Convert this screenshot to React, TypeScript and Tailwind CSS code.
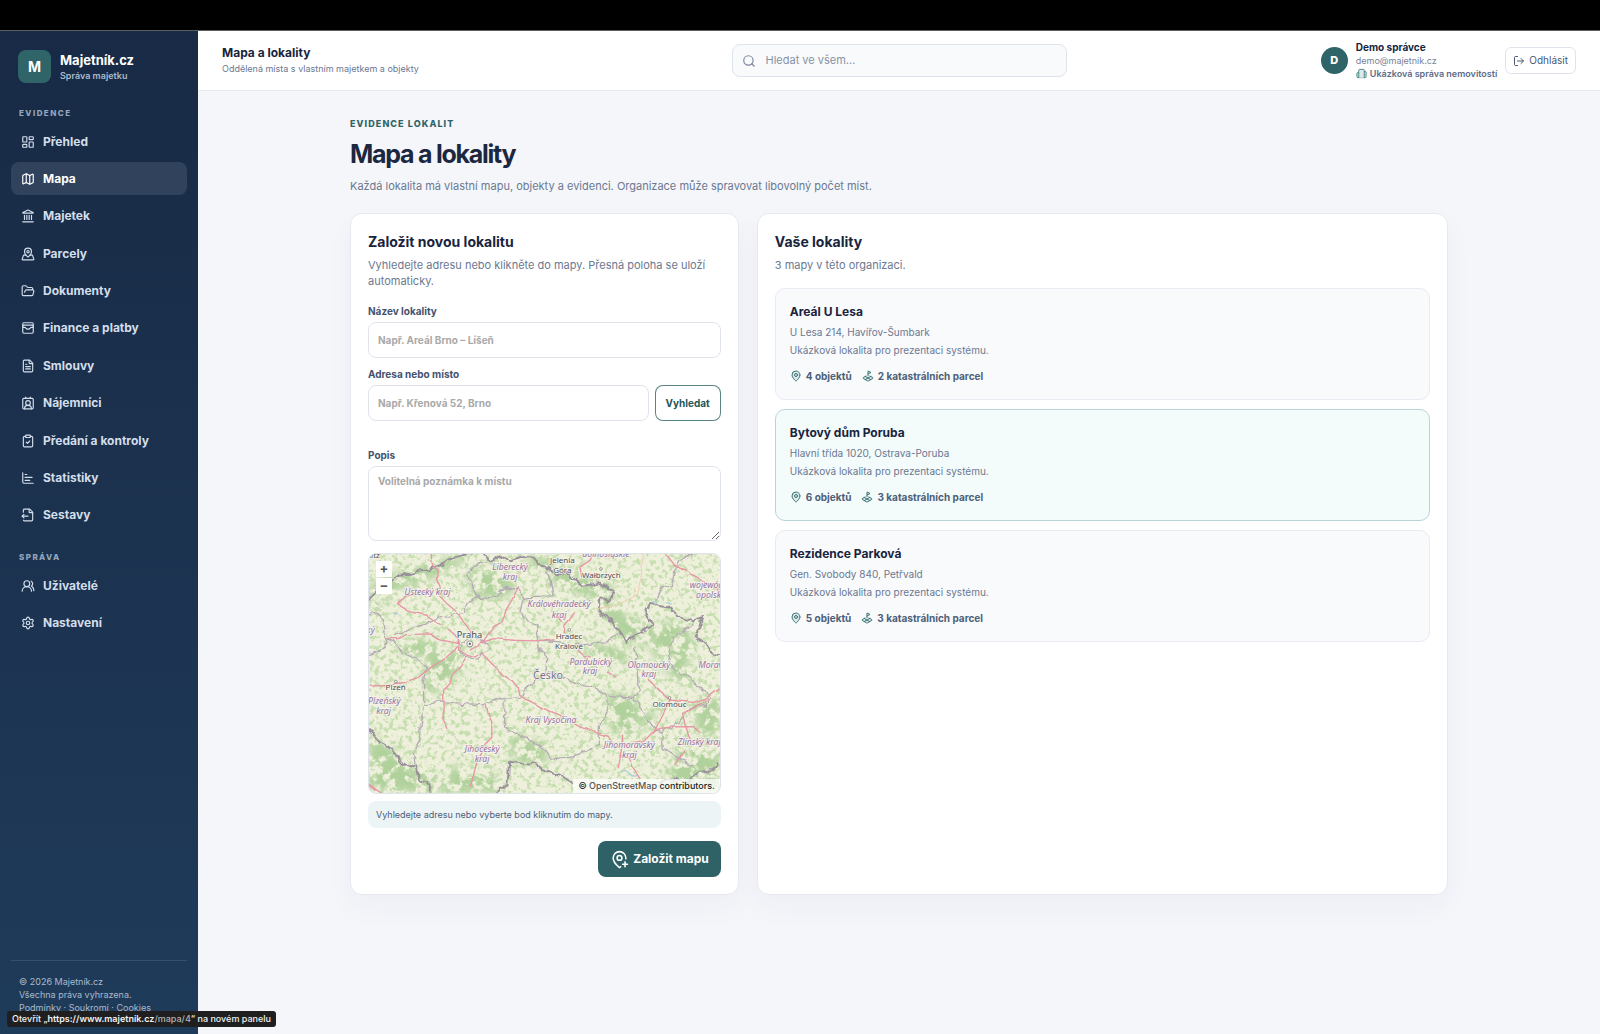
import {
  Building2,
  ChartBar,
  ClipboardCheck,
  ContactRound,
  FileOutput,
  FileText,
  FolderOpen,
  Landmark,
  LandPlot,
  LayoutDashboard,
  LogOut,
  Map as MapIcon,
  MapPin,
  MapPinned,
  MapPinPlus,
  Search,
  Settings,
  UsersRound,
  WalletCards,
  type LucideIcon,
} from 'lucide-react';

interface NavItem {
  label: string;
  icon: LucideIcon;
  active?: boolean;
}

interface Locality {
  name: string;
  address: string;
  note: string;
  objects: string;
  parcels: string;
  highlighted?: boolean;
}

const evidenceItems: NavItem[] = [
  { label: 'Přehled', icon: LayoutDashboard },
  { label: 'Mapa', icon: MapIcon, active: true },
  { label: 'Majetek', icon: Landmark },
  { label: 'Parcely', icon: MapPinned },
  { label: 'Dokumenty', icon: FolderOpen },
  { label: 'Finance a platby', icon: WalletCards },
  { label: 'Smlouvy', icon: FileText },
  { label: 'Nájemníci', icon: ContactRound },
  { label: 'Předání a kontroly', icon: ClipboardCheck },
  { label: 'Statistiky', icon: ChartBar },
  { label: 'Sestavy', icon: FileOutput },
];

const adminItems: NavItem[] = [
  { label: 'Uživatelé', icon: UsersRound },
  { label: 'Nastavení', icon: Settings },
];

const localities: Locality[] = [
  {
    name: 'Areál U Lesa',
    address: 'U Lesa 214, Havířov-Šumbark',
    note: 'Ukázková lokalita pro prezentaci systému.',
    objects: '4 objektů',
    parcels: '2 katastrálních parcel',
  },
  {
    name: 'Bytový dům Poruba',
    address: 'Hlavní třída 1020, Ostrava-Poruba',
    note: 'Ukázková lokalita pro prezentaci systému.',
    objects: '6 objektů',
    parcels: '3 katastrálních parcel',
    highlighted: true,
  },
  {
    name: 'Rezidence Parková',
    address: 'Gen. Svobody 840, Petřvald',
    note: 'Ukázková lokalita pro prezentaci systému.',
    objects: '5 objektů',
    parcels: '3 katastrálních parcel',
  },
];

const roads = [
  '213,26 217,60 234,75 232,105 240,125 236,150 260,175 290,200 310,230 335,262',
  '475,125 455,165 440,190 425,230 400,245 385,265 372,285 330,312',
  '365,292 400,280 460,285 520,287 585,281',
  '613,262 615,240 630,222 643,203',
  '200,143 140,152 108,175 150,200 200,210 240,238',
  '80,280 115,280 140,268 210,266 240,285 300,295',
  '265,252 285,270 300,295 298,315 320,330 345,338 365,325',
  '26,420 75,418 130,412 180,395 215,365 260,335 295,305',
  '315,340 300,365 275,390 270,415 250,435 252,490 248,520 260,548',
  '365,325 400,360 430,390 460,410 475,430 480,455 510,468 550,490 600,510 650,540 700,560 745,575 765,605',
  '378,478 385,510 395,530 395,580 370,605 350,650 340,690 330,722',
  '765,605 800,600 850,590 875,565 900,550 950,545 1000,545 1020,562',
  '862,403 900,440 930,465 905,515 880,565',
  '930,465 1000,472 1040,460 1078,432',
  '1050,462 1000,490 968,505 975,535 992,590',
  '918,26 945,60 990,85 1030,105 1078,135',
  '665,95 660,65 690,45 700,26',
  '808,635 815,665 840,700',
  '788,570 785,610 780,640 775,665',
  '655,315 670,330 690,335',
  '745,378 768,396',
  '585,208 604,228',
  '975,615 945,658',
  '26,718 62,744',
];

const stateBorders = [
  '26,165 50,130 90,115 110,90 150,85 200,75 235,65 260,45 300,30 340,26',
  '370,26 385,48 420,32 450,48 500,32 520,40 545,65 570,70 590,90 630,85 640,100 670,122 720,112 760,135 745,170 720,165 710,190 730,210 760,235 780,260 800,290 830,275 850,255 880,245 865,210 855,190 865,170 900,185 930,190 960,215 1000,228 1030,215 1020,250 1005,270 1030,290 1050,322 1080,330',
  '26,555 60,590 100,615 120,650 150,670 165,662 175,700 200,710 215,746',
  '410,746 415,725 445,725 450,650 480,655 520,655 560,675 600,690 640,715',
  '1080,650 1060,675 1020,680 985,712 940,700 900,712',
];

const regionBorders = [
  '80,280 100,290 130,325 180,345 200,370 190,420 190,480 180,540 178,590 160,620 165,665',
  '100,270 160,250 240,215 310,205 325,175 350,155 335,120 325,80 350,60 375,45',
  '350,155 390,160 430,135 470,130 490,155 580,152 570,110 560,75',
  '490,155 480,200 500,230 530,240 535,280 540,310 560,340 558,380',
  '535,285 600,290 640,300 700,292 740,290 780,265',
  '190,480 240,470 300,478 370,482 400,460 440,462 490,455 500,420 560,378 620,405 700,425 740,455 745,500 715,545 715,600 640,635 575,645 540,600 460,560 430,540 432,465',
  '745,450 820,460 835,430 830,350 820,300',
  '820,460 850,500 880,545 905,560 910,610 970,650 1000,660',
  '905,560 960,530 980,490 1040,480 1050,460 1020,420 940,370 920,330 930,290 1000,235',
  '890,165 905,130 935,120 945,75 960,40 1000,26',
  '26,325 60,315 80,290 75,240 70,205 30,205',
  '298,300 300,325 345,340 385,315 380,290 340,275 300,298',
];

// Places where the woods grow thick: border mountains and highlands.
const woods = [
  '26,185 26,120 110,80 230,45 330,26 300,60 210,100 120,130 60,180',
  '320,75 420,60 470,130 440,155 350,160 325,120',
  '480,26 560,40 640,80 760,115 760,170 640,140 560,100',
  '700,160 760,170 810,220 880,240 860,300 800,300 760,250',
  '870,240 960,230 1005,290 980,370 1000,440 940,400 880,330',
  '26,560 100,610 160,670 250,700 230,744 26,744',
  '200,330 300,310 320,350 240,440 190,440',
  '110,290 230,280 230,330 140,340',
  '740,440 830,460 850,560 780,580 740,520',
  '1000,480 1080,450 1080,580 1010,560',
  '840,480 880,500 890,550 860,545',
  '280,660 420,690 420,744 240,744',
  '640,290 800,310 800,360 690,330',
  '960,600 1080,590 1080,744 900,744',
  '440,560 560,600 560,660 460,650',
];

function LocalityMap() {
  return (
    <svg
      className="block h-full w-full"
      viewBox="26 26 1054 718"
      preserveAspectRatio="xMidYMid slice"
      role="img"
      aria-label="Mapa"
    >
      <defs>
        <filter id="scatter" x="0" y="0" width="100%" height="100%" colorInterpolationFilters="sRGB">
          <feTurbulence type="fractalNoise" baseFrequency="0.07" numOctaves="4" seed="7" />
          <feColorMatrix values="0 0 0 0 0.78  0 0 0 0 0.875  0 0 0 0 0.69  6 0 0 0 -3" />
        </filter>
        <filter id="thick" x="0" y="0" width="100%" height="100%" colorInterpolationFilters="sRGB">
          <feTurbulence type="fractalNoise" baseFrequency="0.03" numOctaves="5" seed="21" />
          <feColorMatrix values="0 0 0 0 0.69  0 0 0 0 0.82  0 0 0 0 0.61  9 0 0 0 -3.9" />
        </filter>
        <filter id="soft" x="-20%" y="-20%" width="140%" height="140%">
          <feGaussianBlur stdDeviation="14" />
        </filter>
        <filter id="wiggle" x="-5%" y="-5%" width="110%" height="110%">
          <feTurbulence type="fractalNoise" baseFrequency="0.035" numOctaves="2" seed="4" />
          <feDisplacementMap in="SourceGraphic" scale="24" xChannelSelector="R" yChannelSelector="G" />
        </filter>
        <filter id="bend" x="-5%" y="-5%" width="110%" height="110%">
          <feTurbulence type="fractalNoise" baseFrequency="0.025" numOctaves="1" seed="9" />
          <feDisplacementMap in="SourceGraphic" scale="12" xChannelSelector="R" yChannelSelector="G" />
        </filter>
        <mask id="woods" maskUnits="userSpaceOnUse" x="26" y="26" width="1054" height="718">
          <g fill="#fff" filter="url(#soft)">
            {woods.map((points) => (
              <polygon key={points} points={points} />
            ))}
          </g>
        </mask>
      </defs>

      <rect x="26" y="26" width="1054" height="718" fill="#eff0dc" />
      <rect x="26" y="26" width="1054" height="718" filter="url(#scatter)" />
      <g mask="url(#woods)">
        <rect x="26" y="26" width="1054" height="718" filter="url(#thick)" />
      </g>

      <g fill="none" stroke="#a9cfdc" strokeWidth="4" strokeLinecap="round">
        <path d="M785 680q14-8 22 4t26 8M100 204l12 2M920 172l14 4M880 168l10 4M368 634l10 4" />
      </g>

      <g fill="none" strokeLinejoin="round" filter="url(#wiggle)">
        <g stroke="#b5abb5" strokeWidth="4">
          {regionBorders.map((points) => (
            <polyline key={points} points={points} />
          ))}
        </g>
        <g stroke="#9a909b" strokeWidth="6">
          {stateBorders.map((points) => (
            <polyline key={points} points={points} />
          ))}
        </g>
      </g>

      <g fill="none" strokeLinejoin="round" strokeLinecap="round" filter="url(#bend)">
        <polyline points="850,26 845,90 830,150 770,180 710,190" stroke="#f0cdb4" strokeWidth="3" />
        <g stroke="#e895a4" strokeWidth="4">
          {roads.map((points) => (
            <polyline key={points} points={points} />
          ))}
        </g>
      </g>

      <g
        fill="#94709f"
        stroke="#f7f5ee"
        strokeWidth="4"
        paintOrder="stroke"
        textAnchor="middle"
        fontSize="26"
        className="font-['Noto_Sans',sans-serif] italic"
      >
        <text x="450" y="74">Liberecký</text>
        <text x="450" y="105">kraj</text>
        <text x="202" y="150">Ústecký kraj</text>
        <text x="597" y="186">Královéhradecký</text>
        <text x="597" y="217">kraj</text>
        <text x="738" y="34">dolnośląskie</text>
        <text x="1046" y="127">wojewódz</text>
        <text x="1056" y="158">opolskie</text>
        <text x="692" y="358">Pardubický</text>
        <text x="690" y="388">kraj</text>
        <text x="867" y="367">Olomoucký</text>
        <text x="867" y="397">kraj</text>
        <text x="1058" y="367">Moravs</text>
        <text x="72" y="477">Plzeňský</text>
        <text x="70" y="508">kraj</text>
        <text x="25" y="263">ský</text>
        <text x="573" y="533">Kraj Vysočina</text>
        <text x="366" y="620">Jihočeský</text>
        <text x="366" y="650">kraj</text>
        <text x="808" y="608">Jihomoravský</text>
        <text x="808" y="639">kraj</text>
        <text x="1018" y="600">Zlínský kraj</text>
      </g>

      <g
        fill="#4b4a4d"
        stroke="#f7f5ee"
        strokeWidth="4"
        paintOrder="stroke"
        textAnchor="middle"
        fontSize="24"
        className="font-['Noto_Sans',sans-serif]"
      >
        <text x="607" y="54">Jelenia</text>
        <text x="607" y="82">Góra</text>
        <text x="724" y="97">Wałbrzych</text>
        <text x="627" y="282">Hradec</text>
        <text x="627" y="311">Králové</text>
        <text x="106" y="434">Plzeň</text>
        <text x="929" y="486">Olomouc</text>
        <text x="38" y="39">nitz</text>
        <text x="328" y="279" fontSize="28">Praha</text>
        <text x="564" y="403" fontSize="32" fill="#77708a">Česko</text>
      </g>
      <g fill="#fff" stroke="#6d6b6b" strokeWidth="2">
        <circle cx="329" cy="296" r="9" />
        <circle cx="329" cy="296" r="3" fill="#555" />
        <circle cx="723" cy="71" r="4" />
        <circle cx="628" cy="254" r="4" />
        <circle cx="107" cy="409" r="4" />
        <circle cx="929" cy="458" r="4" />
      </g>
    </svg>
  );
}

function NavLink({ label, icon: Icon, active }: NavItem) {
  return (
    <li>
      <a
        href="#"
        aria-current={active ? 'page' : undefined}
        className={`flex h-[33px] items-center gap-2 rounded-lg px-[10px] text-[12px] font-bold ${
          active ? 'bg-[#31425c] text-white' : 'text-[#d3deeb]'
        }`}
      >
        <Icon className="h-[14px] w-[14px] shrink-0" />
        {label}
      </a>
    </li>
  );
}

function Sidebar() {
  return (
    <aside className="flex w-[198px] shrink-0 flex-col bg-linear-to-b from-[#182a45] to-[#1f3b5a] px-[11px] pt-[19px] pb-5">
      <div className="flex items-center gap-[9px] px-[7px]">
        <div className="flex h-[33px] w-[33px] items-center justify-center rounded-lg bg-[#2f6568] text-[14px] font-bold text-white">
          M
        </div>
        <div>
          <div className="text-[13px] leading-[18px] font-bold text-white">Majetník.cz</div>
          <div className="text-[9px] leading-[14px] font-semibold text-[#a9bacd]">Správa majetku</div>
        </div>
      </div>

      <nav aria-label="Hlavní navigace">
        <h2 className="mt-6 px-2 text-[8px] leading-3 font-extrabold tracking-[0.18em] text-[#93a6bd] uppercase">
          Evidence
        </h2>
        <ul className="mt-[6px] flex h-[407px] flex-col justify-between">
          {evidenceItems.map((item) => (
            <NavLink key={item.label} {...item} />
          ))}
        </ul>
        <h2 className="mt-[19px] px-2 text-[8px] leading-3 font-extrabold tracking-[0.18em] text-[#93a6bd] uppercase">
          Správa
        </h2>
        <ul className="mt-[6px] flex flex-col gap-1">
          {adminItems.map((item) => (
            <NavLink key={item.label} {...item} />
          ))}
        </ul>
      </nav>

      <footer className="mt-auto border-t border-[#34506e] px-2 pt-[14px] text-[9px] leading-[13px] text-[#a9bacd]">
        <p>© 2026 Majetník.cz</p>
        <p>Všechna práva vyhrazena.</p>
        <p>
          <a href="#">Podmínky</a> · <a href="#">Soukromí</a> · <a href="#">Cookies</a>
        </p>
      </footer>
    </aside>
  );
}

function TopBar() {
  return (
    <header className="grid h-[60px] grid-cols-[1fr_335px_1fr] items-center border-b border-[#e6e9f0] bg-white px-6">
      <div>
        <div className="text-[12px] leading-[17px] font-bold text-[#18243d]">Mapa a lokality</div>
        <div className="text-[9px] leading-4 text-[#6b7891]">
          Oddělená místa s vlastním majetkem a objekty
        </div>
      </div>

      <label className="flex h-[33px] items-center gap-[10px] rounded-lg border border-[#dfe3ec] bg-[#f9fafc] px-[9px]">
        <Search className="h-[14px] w-[14px] text-[#7c879b]" />
        <input
          type="search"
          aria-label="Hledat ve všem"
          placeholder="Hledat ve všem..."
          className="min-w-0 flex-1 bg-transparent text-[11px] outline-none placeholder:text-[#8792a5]"
        />
      </label>

      <div className="flex items-center justify-end gap-2">
        <div className="flex h-[27px] w-[27px] items-center justify-center rounded-full bg-[#2f6568] text-[11px] font-extrabold text-white">
          D
        </div>
        <div className="text-[9px] leading-[13px]">
          <div className="text-[10px] leading-[13px] font-bold text-[#18243d]">Demo správce</div>
          <div className="text-[#76839a]">demo@majetnik.cz</div>
          <div className="flex items-center gap-[3px] font-semibold text-[#5d6c88]">
            <Building2 className="h-[11px] w-[11px] fill-[#dcebe9] text-[#3f7f7c]" />
            Ukázková správa nemovitostí
          </div>
        </div>
        <button
          type="button"
          className="flex h-[27px] items-center gap-1 rounded-md border border-[#dfe3ec] bg-white px-[7px] text-[10px] text-[#4a5872]"
        >
          <LogOut className="h-3 w-3" />
          Odhlásit
        </button>
      </div>
    </header>
  );
}

function CreateLocality() {
  const fieldClass =
    'block w-full rounded-lg border border-[#dfe3ec] bg-white px-[9px] text-[10px] font-bold outline-none placeholder:text-[#a9a9a9]';
  const labelClass = 'block text-[10px] leading-3 font-bold text-[#44526f]';

  return (
    <section className="rounded-xl border border-[#e6e9f0] bg-white p-[17px] shadow-[0_12px_28px_rgba(40,50,100,0.04)]">
      <h2 className="text-[14px] leading-[22px] font-bold text-[#18243d]">Založit novou lokalitu</h2>
      <p className="mt-1 text-[11px] leading-4 text-[#6b7891]">
        Vyhledejte adresu nebo klikněte do mapy. Přesná poloha se uloží automaticky.
      </p>

      <form className="mt-4">
        <label htmlFor="name" className={labelClass}>
          Název lokality
        </label>
        <input id="name" type="text" placeholder="Např. Areál Brno – Líšeň" className={`${fieldClass} mt-[5px] h-9`} />

        <label htmlFor="address" className={`${labelClass} mt-[10px]`}>
          Adresa nebo místo
        </label>
        <div className="mt-[5px] flex gap-[6px]">
          <input id="address" type="text" placeholder="Např. Křenová 52, Brno" className={`${fieldClass} h-9 min-w-0 flex-1`} />
          <button
            type="button"
            className="h-9 rounded-lg border border-[#2f6568]/80 bg-white px-[10px] text-[10px] font-bold text-[#24565a]"
          >
            Vyhledat
          </button>
        </div>

        <label htmlFor="note" className={`${labelClass} mt-7`}>
          Popis
        </label>
        <textarea
          id="note"
          placeholder="Volitelná poznámka k místu"
          className={`${fieldClass} mt-[5px] h-[75px] resize-y py-2 leading-3`}
        />

        <div className="relative mt-3 h-[241px] overflow-hidden rounded-lg border border-[#dfe3ec]">
          <LocalityMap />
          <div className="absolute top-[7px] left-[7px] flex flex-col gap-px text-[13px] font-bold text-[#555]">
            <button type="button" aria-label="Přiblížit" className="flex h-4 w-4 items-center justify-center bg-white">
              +
            </button>
            <button type="button" aria-label="Oddálit" className="flex h-4 w-4 items-center justify-center bg-white">
              −
            </button>
          </div>
          <div className="absolute right-0 bottom-0 bg-white/75 px-[5px] text-[9px] leading-[14px] font-medium text-[#222]">
            ©{' '}
            <a href="#" className="text-[#555]">
              OpenStreetMap
            </a>{' '}
            contributors.
          </div>
        </div>

        <p className="mt-[7px] rounded-lg bg-[#ecf4f6] px-2 py-[7px] text-[9px] leading-[13px] text-[#4c6078]">
          Vyhledejte adresu nebo vyberte bod kliknutím do mapy.
        </p>

        <div className="mt-[13px] flex justify-end">
          <button
            type="submit"
            className="flex h-9 items-center gap-1 rounded-lg bg-[#2f6266] px-3 text-[12px] font-bold text-white"
          >
            <MapPinPlus className="h-[19px] w-[19px]" />
            Založit mapu
          </button>
        </div>
      </form>
    </section>
  );
}

function LocalityCard({ name, address, note, objects, parcels, highlighted }: Locality) {
  return (
    <a
      href="#"
      className={`block rounded-[10px] border px-[14px] pt-[14px] pb-[17px] ${
        highlighted ? 'border-[#b9d3d6] bg-[#f4fbfb]' : 'border-[#e8ebf2] bg-[#f9fafc]'
      }`}
    >
      <h3 className="text-[12px] leading-[18px] font-bold text-[#18243d]">{name}</h3>
      <div className="mt-[2px] text-[10px] leading-[18px] text-[#6b7891]">
        <p>{address}</p>
        <p>{note}</p>
      </div>
      <div className="mt-[11px] flex gap-[10px] text-[10px] leading-3 font-bold text-[#4c6078]">
        <span className="flex items-center gap-1">
          <MapPin className="h-3 w-3 fill-[#dcebe9] text-[#3f7277]" />
          {objects}
        </span>
        <span className="flex items-center gap-1">
          <LandPlot className="h-3 w-3 fill-[#dcebe9] text-[#3f7277]" />
          {parcels}
        </span>
      </div>
    </a>
  );
}

export default function App() {
  return (
    <div className="flex min-h-screen flex-col bg-[#f5f6fa] font-['Inter',sans-serif]">
      <div className="h-[31px] border-b border-[#5d5e62] bg-black" />
      <div className="flex flex-1">
        <Sidebar />
        <div className="min-w-0 flex-1">
          <TopBar />
          <main className="mx-auto max-w-[1098px] pt-[27px]">
            <p className="text-[9px] leading-3 font-extrabold tracking-[0.12em] text-[#2f6568] uppercase">
              Evidence lokalit
            </p>
            <h1 className="mt-2 text-[25px] leading-8 font-bold tracking-tighter text-[#1c2740]">Mapa a lokality</h1>
            <p className="mt-[7px] text-[11px] leading-[18px] text-[#6b7891]">
              Každá lokalita má vlastní mapu, objekty a evidenci. Organizace může spravovat libovolný počet míst.
            </p>

            <div className="mt-[18px] grid grid-cols-[9fr_16fr] gap-[18px]">
              <CreateLocality />
              <section className="rounded-xl border border-[#e6e9f0] bg-white p-[17px] shadow-[0_12px_28px_rgba(40,50,100,0.04)]">
                <h2 className="text-[14px] leading-[22px] font-bold text-[#18243d]">Vaše lokality</h2>
                <p className="mt-1 text-[11px] leading-4 text-[#6b7891]">3 mapy v této organizaci.</p>
                <div className="mt-[15px] flex flex-col gap-[9px]">
                  {localities.map((locality) => (
                    <LocalityCard key={locality.name} {...locality} />
                  ))}
                </div>
              </section>
            </div>
          </main>
        </div>
      </div>

      {/* link preview in the window corner */}
      <div className="fixed bottom-[7px] left-[7px] rounded-[3px] bg-[#1f1f20] px-[5px] text-[9px] leading-4 font-medium text-[#f2f2f2]">
        Otevřít „<span className="font-semibold">https://www.majetnik.cz</span>
        <span className="text-[#b5b5b5]">/mapa/4</span>“ na novém panelu
      </div>
    </div>
  );
}
